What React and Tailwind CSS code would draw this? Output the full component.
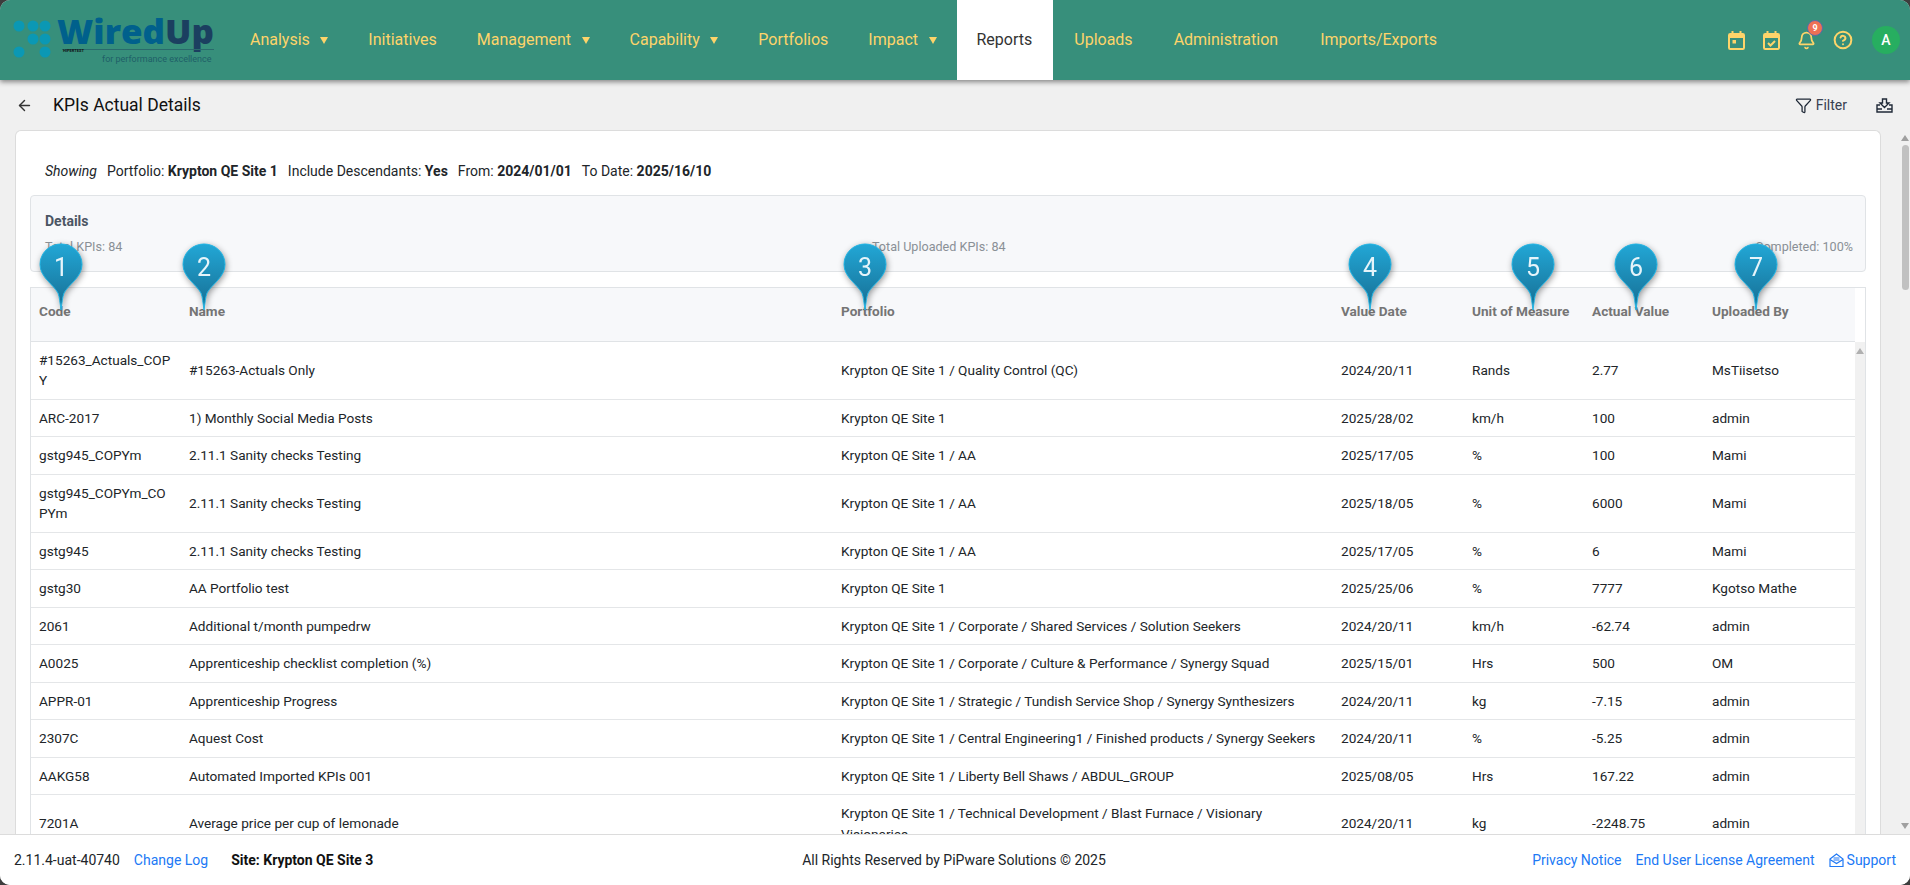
import { ArrowLeft, Bell, CircleHelp, Funnel } from 'lucide-react';

const navItems = [
    { label: 'Analysis', caret: true, pad: 'px-5' },
    { label: 'Initiatives', pad: 'px-5' },
    { label: 'Management', caret: true, pad: 'px-5' },
    { label: 'Capability', caret: true, pad: 'px-5' },
    { label: 'Portfolios', pad: 'px-5' },
    { label: 'Impact', caret: true, pad: 'px-5' },
    { label: 'Reports', active: true, pad: 'pl-5 pr-[21px]' },
    { label: 'Uploads', pad: 'pl-[21px] pr-5' },
    { label: 'Administration', pad: 'pl-[21px] pr-5' },
    { label: 'Imports/Exports', pad: 'pl-[22px] pr-5' },
];

const rows = [
    ['#15263_Actuals_COPY', '#15263-Actuals Only', 'Krypton QE Site 1 / Quality Control (QC)', '2024/20/11', 'Rands', '2.77', 'MsTiisetso'],
    ['ARC-2017', '1) Monthly Social Media Posts', 'Krypton QE Site 1', '2025/28/02', 'km/h', '100', 'admin'],
    ['gstg945_COPYm', '2.11.1 Sanity checks Testing', 'Krypton QE Site 1 / AA', '2025/17/05', '%', '100', 'Mami'],
    ['gstg945_COPYm_COPYm', '2.11.1 Sanity checks Testing', 'Krypton QE Site 1 / AA', '2025/18/05', '%', '6000', 'Mami'],
    ['gstg945', '2.11.1 Sanity checks Testing', 'Krypton QE Site 1 / AA', '2025/17/05', '%', '6', 'Mami'],
    ['gstg30', 'AA Portfolio test', 'Krypton QE Site 1', '2025/25/06', '%', '7777', 'Kgotso Mathe'],
    ['2061', 'Additional t/month pumpedrw', 'Krypton QE Site 1 / Corporate / Shared Services / Solution Seekers', '2024/20/11', 'km/h', '-62.74', 'admin'],
    ['A0025', 'Apprenticeship checklist completion (%)', 'Krypton QE Site 1 / Corporate / Culture & Performance / Synergy Squad', '2025/15/01', 'Hrs', '500', 'OM'],
    ['APPR-01', 'Apprenticeship Progress', 'Krypton QE Site 1 / Strategic / Tundish Service Shop / Synergy Synthesizers', '2024/20/11', 'kg', '-7.15', 'admin'],
    ['2307C', 'Aquest Cost', 'Krypton QE Site 1 / Central Engineering1 / Finished products / Synergy Seekers', '2024/20/11', '%', '-5.25', 'admin'],
    ['AAKG58', 'Automated Imported KPIs 001', 'Krypton QE Site 1 / Liberty Bell Shaws / ABDUL_GROUP', '2025/08/05', 'Hrs', '167.22', 'admin'],
    ['7201A', 'Average price per cup of lemonade', 'Krypton QE Site 1 / Technical Development / Blast Furnace / Visionary Visionaries', '2024/20/11', 'kg', '-2248.75', 'admin'],
];

const columns = [
    { label: 'Code', width: 'w-[150px]' },
    { label: 'Name', width: 'w-[652px]' },
    { label: 'Portfolio', width: 'w-[500px]' },
    { label: 'Value Date', width: 'w-[131px]' },
    { label: 'Unit of Measure', width: 'w-[120px]' },
    { label: 'Actual Value', width: 'w-[120px]' },
    { label: 'Uploaded By', width: 'w-[151px]' },
];

const pins = [
    { n: 1, pos: 'left-[39px]' },
    { n: 2, pos: 'left-[182px]' },
    { n: 3, pos: 'left-[843px]' },
    { n: 4, pos: 'left-[1348px]' },
    { n: 5, pos: 'left-[1511px]' },
    { n: 6, pos: 'left-[1614px]' },
    { n: 7, pos: 'left-[1734px]' },
];

function Logo() {
    const dots = [[19, 26], [33, 26], [45, 26], [33, 39], [45, 39], [19, 52], [45, 52]];
    return (
        <svg width="230" height="80" viewBox="0 0 230 80" className="shrink-0">
            {dots.map(([cx, cy]) => (
                <circle key={`${cx}-${cy}`} cx={cx} cy={cy} r="5.5" fill="#0b98b4" />
            ))}
            <text x="57" y="44" fontFamily="Open Sans" fontWeight="800" fontSize="34" textLength="157" lengthAdjust="spacingAndGlyphs">
                <tspan fill="#00608c">Wired</tspan>
                <tspan fill="#1b3f60">Up</tspan>
            </text>
            <line x1="62" y1="49.5" x2="214" y2="49.5" stroke="#2a6a6c" strokeWidth="1" />
            <text x="63" y="52" fontFamily="Roboto" fontSize="4" fontWeight="700" fill="#111">HIPERTEST</text>
            <text x="102" y="62" fontFamily="Roboto" fontSize="9" fill="#1f5f68">for performance excellence</text>
        </svg>
    );
}

function NavCaret() {
    return (
        <svg width="8" height="7" viewBox="0 0 8 7" className="ml-[10.5px]">
            <path d="M0 0 H8 L4 7 Z" fill="#fdd46a" />
        </svg>
    );
}

function CalendarIcon({ check }) {
    return (
        <svg width="17" height="19" viewBox="0 0 17 19" fill="none" stroke="#fdd46a" strokeWidth="2">
            <rect x="1" y="3" width="15" height="15" rx="1.2" />
            <path d="M1 5.5 H16" strokeWidth="3" />
            <path d="M4.5 0 V3 M12.5 0 V3" />
            {check ? (
                <path d="M5 12 L7.5 14.5 L12 10" />
            ) : (
                <rect x="4.5" y="9" width="3.5" height="3.5" fill="#fdd46a" stroke="none" />
            )}
        </svg>
    );
}

function DownloadIcon() {
    return (
        <svg width="17" height="15" viewBox="0 0 17 15" fill="none" stroke="#1f2937" strokeWidth="1.4">
            <path d="M6.5 1 H10.5 V5 H13 L8.5 9.5 L4 5 H6.5 Z" />
            <path d="M4 7 H1 V14 H16 V7 H13" />
            <path d="M1 11 H6 M11 11 H16" />
        </svg>
    );
}

function SupportIcon() {
    return (
        <svg width="15" height="15" viewBox="0 0 15 15" fill="none" stroke="#2079f5" strokeWidth="1.2">
            <path d="M1 6 L7.5 1 L14 6 V13.5 H1 Z" />
            <path d="M1 6.5 L7.5 10.5 L14 6.5" />
            <path d="M4.5 5 H10.5 M4.5 7 H10.5" />
        </svg>
    );
}

function Pin({ n, pos }) {
    return (
        <div className={`absolute top-[113px] w-[44px] h-[68px] drop-shadow-[1px_2px_3px_rgba(0,0,0,0.4)] ${pos}`}>
            <svg width="44" height="68" viewBox="0 0 44 68" className="absolute inset-0">
                <defs>
                    <linearGradient id={`pin-${n}`} x1="0" y1="0" x2="0" y2="1">
                        <stop offset="0" stopColor="#22a7d6" />
                        <stop offset="0.7" stopColor="#1a7ea6" />
                        <stop offset="1" stopColor="#0f6f92" />
                    </linearGradient>
                </defs>
                <path
                    d="M22 1 C10.5 1 1 10 1 21.5 C1 34 14 41 19 50 C20.5 54 21 60 22 67 C23 60 23.5 54 25 50 C30 41 43 34 43 21.5 C43 10 33.5 1 22 1 Z"
                    fill={`url(#pin-${n})`}
                    stroke="#22b4e4"
                    strokeWidth="1"
                />
            </svg>
            <span className="absolute inset-x-0 top-[7px] text-center text-[25px] leading-[36px] text-[#e6f4fa]">{n}</span>
        </div>
    );
}

export default function App() {
    return (
        <div className="h-screen bg-[#3d3d3d] overflow-hidden font-['Roboto',sans-serif] text-sm text-[#212529]">
            <div className="h-full rounded-[10px] overflow-hidden flex flex-col bg-[#f0f0f0] relative">
                <header className="h-20 shrink-0 flex items-center bg-[#378f7b] shadow-[0_2px_5px_rgba(0,0,0,0.45)] relative z-10">
                    <Logo />
                    <nav className="flex h-full">
                        {navItems.map(item => (
                            <div
                                key={item.label}
                                className={`flex items-center text-base ${item.pad} ${item.active ? 'bg-white text-[#333]' : 'text-[#fdd46a]'}`}
                            >
                                {item.label}
                                {item.caret && <NavCaret />}
                            </div>
                        ))}
                    </nav>
                    <div className="ml-auto flex items-center mr-[10px]">
                        <div className="w-[35px] flex justify-center"><CalendarIcon /></div>
                        <div className="w-[35px] flex justify-center"><CalendarIcon check /></div>
                        <div className="w-[35px] flex justify-center relative">
                            <Bell size={19} color="#fdd46a" strokeWidth={2.2} />
                            <span className="absolute -top-[11px] left-[18px] w-4 h-4 rounded-full bg-[#ee7055] border border-[#5a6aa8] text-white text-[9px] font-bold leading-[14px] text-center">9</span>
                        </div>
                        <div className="w-[37px] flex justify-center"><CircleHelp size={20} color="#fdd46a" strokeWidth={2.4} /></div>
                        <div className="ml-[11px] w-7 h-7 rounded-full bg-[#27ae60] text-white flex items-center justify-center text-sm font-medium">A</div>
                    </div>
                </header>

                <div className="h-[50px] shrink-0 flex items-center pl-[16px] pr-[17px]">
                    <ArrowLeft size={17} className="text-[#333]" />
                    <h1 className="ml-[20px] text-[17.5px] text-[#111]">KPIs Actual Details</h1>
                    <div className="ml-auto flex items-center text-[#374151]">
                        <Funnel size={17} strokeWidth={1.8} className="text-[#1f2937]" />
                        <span className="ml-[4px]">Filter</span>
                        <span className="ml-[29px]"><DownloadIcon /></span>
                    </div>
                </div>

                <main className="flex-1 min-h-0 flex pl-[15px] relative">
                    <div className="w-[1866px] shrink-0 bg-white border border-b-0 border-[#dcdcdc] rounded-t-md px-[14px] overflow-hidden">
                        <p className="h-[64px] flex items-center pl-[15px] pt-[15px] gap-[10px] whitespace-pre">
                            <i>Showing</i>
                            <span>Portfolio: <b className="font-bold">Krypton QE Site 1</b></span>
                            <span>Include Descendants: <b className="font-bold">Yes</b></span>
                            <span>From: <b className="font-bold">2024/01/01</b></span>
                            <span>To Date: <b className="font-bold">2025/16/10</b></span>
                        </p>
                        <section className="h-[77px] bg-[#f7f8fa] border border-[#e0e3e6] rounded-[4px] pl-[14px] pr-[12px] pt-[15px]">
                            <h2 className="font-bold text-[#4b5563] leading-[20px]">Details</h2>
                            <div className="mt-[7px] flex justify-between text-[12.6px] text-[#8a9096]">
                                <span>Total KPIs: 84</span>
                                <span>Total Uploaded KPIs: 84</span>
                                <span>Completed: 100%</span>
                            </div>
                        </section>
                        <div className="mt-[15px] flex border border-[#e0e3e6] border-b-0 h-[600px]">
                            <table className="w-[1824px] table-fixed border-collapse self-start text-[13.6px]">
                                <thead>
                                    <tr className="h-[53px] bg-[#f7f8fa] border-b border-[#e0e3e6]">
                                        {columns.map(col => (
                                            <th key={col.label} className={`${col.width} px-2 pb-[7px] text-left font-bold text-[#757575] leading-[20px]`}>{col.label}</th>
                                        ))}
                                    </tr>
                                </thead>
                                <tbody>
                                    {rows.map(row => (
                                        <tr key={row[0]} className="border-b border-[#e4e6e8]">
                                            {row.map((cell, i) => (
                                                <td key={i} className="px-2 py-2 leading-[20.5px] text-[#212529] wrap-anywhere">{cell}</td>
                                            ))}
                                        </tr>
                                    ))}
                                </tbody>
                            </table>
                            <div className="flex-1 flex flex-col">
                                <div className="h-[54px] shrink-0" />
                                <div className="flex-1 bg-[#f1f1f1] flex justify-center pt-[6px]">
                                    <div className="w-0 h-0 border-x-[4px] border-x-transparent border-b-[6px] border-b-[#b0b0b0]" />
                                </div>
                            </div>
                        </div>
                    </div>
                    <div className="ml-[19px] flex-1 bg-[#f1f1f1] flex flex-col items-center">
                        <div className="mt-[5px] w-0 h-0 border-x-[4px] border-x-transparent border-b-[6px] border-b-[#a0a0a0]" />
                        <div className="mt-[4px] w-[7px] h-[145px] rounded bg-[#c1c1c1]" />
                        <div className="mt-auto mb-[5px] w-0 h-0 border-x-[4px] border-x-transparent border-t-[6px] border-t-[#a0a0a0]" />
                    </div>
                    {pins.map(pin => <Pin key={pin.n} n={pin.n} pos={pin.pos} />)}
                </main>

                <footer className="h-[51px] shrink-0 bg-white border-t border-[#dcdcdc] flex items-center pl-[14px] pr-[14px] relative z-10">
                    <div className="flex-1 flex items-center">
                        <span>2.11.4-uat-40740</span>
                        <a className="ml-[14px] text-[#2079f5]">Change Log</a>
                        <b className="ml-[23px] font-bold text-[#111]">Site: Krypton QE Site 3</b>
                    </div>
                    <div className="-ml-[2px]">All Rights Reserved by PiPware Solutions © 2025</div>
                    <div className="flex-1 flex items-center justify-end text-[#2079f5]">
                        <a>Privacy Notice</a>
                        <a className="ml-[14px]">End User License Agreement</a>
                        <span className="ml-[14px] mr-[3px]"><SupportIcon /></span>
                        <a>Support</a>
                    </div>
                </footer>
            </div>
        </div>
    );
}
